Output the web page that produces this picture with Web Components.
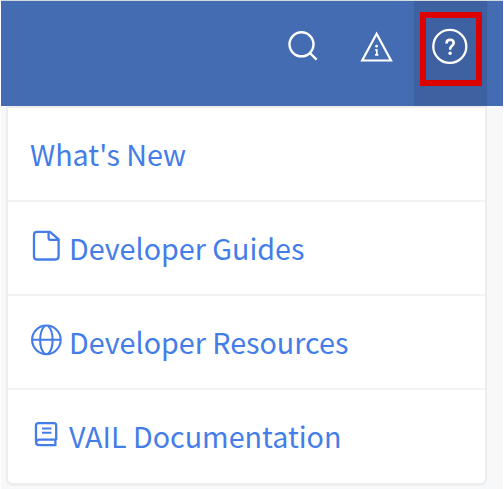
<!DOCTYPE html>
<html lang="en"><head><meta charset="utf-8"><title>Help menu</title>
<style>html,body{margin:0;height:100%;overflow:hidden;background:#fff}</style></head>
<body>
<help-page></help-page>
<script>
const icons={
search:`<svg width="32" height="32" viewBox="0 0 32 32"><g fill="none" stroke="#fff" stroke-width="2.4"><circle cx="13.5" cy="14.3" r="12"/><path d="M21.8 23l6.8 6.7"/></g></svg>`,
alert:`<svg width="34" height="32" viewBox="0 0 34 32"><path d="M16.6 3.8L31 30.5H2.2Z" fill="none" stroke="#fff" stroke-width="2.2"/><circle cx="16.6" cy="16.2" r="1.4" fill="#fff"/><path d="M15.2 19.8h1.6v5M15 24.8h3.4" fill="none" stroke="#fff" stroke-width="1.7"/></svg>`,
help:`<svg width="38" height="38" viewBox="0 0 38 38"><g fill="none" stroke="#fff"><circle cx="18.8" cy="18.4" r="16.5" stroke-width="2.3"/><path d="M15.5 15.6c0-2.4 1.3-3.8 3.6-3.8 2.2 0 3.6 1.3 3.6 3.3 0 2.8-3.5 2.9-3.5 5.4v1.2" stroke-width="2.6"/></g><circle cx="19.1" cy="25.2" r="1.7" fill="#fff"/></svg>`,
file:`<svg width="34" height="34" viewBox="0 0 34 34"><path d="M7 2.8H20L28.6 10.3V27Q28.6 30.5 25.6 30.5H7Q4 30.5 4 27.5V5.8Q4 2.8 7 2.8ZM18.6 2.8V9Q18.6 10.8 20.2 10.8H28.6" fill="none" stroke="currentColor" stroke-width="2.3"/></svg>`,
globe:`<svg width="34" height="34" viewBox="0 0 34 34"><g fill="none" stroke="currentColor" stroke-width="2.1"><circle cx="16.4" cy="16.8" r="14.3"/><path d="M2 16.8h29M14.8 2.6C8.6 9.2 8.6 24.6 14.8 31M18 2.6C24.2 9.2 24.2 24.6 18 31"/></g></svg>`,
book:`<svg width="34" height="34" viewBox="0 0 34 34"><g fill="none" stroke="currentColor" stroke-width="2.3"><path d="M26.2 23V8.6Q26.2 6.2 23.8 6.2H8.5Q6 6.2 6 8.6V24.7Q6 28.2 9.1 28.2H26.5M6 25.2Q6.6 22.7 9.1 22.7H26.2M25.4 22.7V28.2"/><path d="M12 11.5h9.5M12 15.7h9.5" stroke-width="2.1"/></g></svg>`};
class Base extends HTMLElement{
  draw(html){this.attachShadow({mode:'open'}).innerHTML=html}
}
customElements.define('ui-icon',class extends Base{
  connectedCallback(){this.draw(`<style>:host{display:block;flex:none}svg{display:block}</style>${icons[this.getAttribute('name')]}`)}
});
customElements.define('top-bar',class extends Base{
  connectedCallback(){this.draw(`<style>
  :host{display:flex;justify-content:flex-end;box-sizing:border-box;height:105px;background:#436cb3;padding-right:16px}
  .tool{padding-top:29px}.s{margin-right:40px}.a{margin-right:20px}
  .active{box-sizing:border-box;width:73px;background:#3e61a2;padding:11px 5px 0 6px}
  .ring{box-sizing:border-box;width:62px;height:74px;border:6px solid #dc0000;display:flex;justify-content:center;padding-top:10px;padding-right:2px}
  </style><ui-icon class="tool s" name="search"></ui-icon><ui-icon class="tool a" name="alert"></ui-icon>
  <div class="active"><div class="ring"><ui-icon name="help"></ui-icon></div></div>`)}
});
customElements.define('menu-item',class extends Base{
  connectedCallback(){const i=this.getAttribute('icon');this.draw(`<style>
  :host{display:flex;box-sizing:border-box;height:94px;padding-left:22px;border-bottom:2px solid #f2f2f3;color:#447de8;font:28.7px/44px "Noto Sans CJK SC","Noto Sans",sans-serif}
  :host(:last-child){border-bottom:0;height:93px}
  ui-icon{margin:27px 5px 0 0}span{padding-top:24px;white-space:nowrap}
  </style>${i?`<ui-icon name="${i}"></ui-icon>`:''}<span><slot></slot></span>`)}
});
customElements.define('help-menu',class extends Base{
  connectedCallback(){this.draw(`<style>
  :host{display:block;box-sizing:border-box;width:481px;height:380px;margin-left:5px;border:solid #ededee;border-width:2px 2px 3px;border-radius:0 0 7px 7px;background:#fff}
  </style><slot></slot>`)}
});
customElements.define('help-page',class extends Base{
  connectedCallback(){this.draw(`<style>
  :host{display:block;box-sizing:border-box;width:504px;height:489px;border:1px solid #fff;border-top-color:#d5dae2;border-bottom:0;background:#f7f8fa}
  </style><top-bar></top-bar><help-menu>
  <menu-item>What's New</menu-item><menu-item icon="file">Developer Guides</menu-item><menu-item icon="globe">Developer Resources</menu-item><menu-item icon="book">VAIL Documentation</menu-item></help-menu>`)}
});
</script>
</body></html>
